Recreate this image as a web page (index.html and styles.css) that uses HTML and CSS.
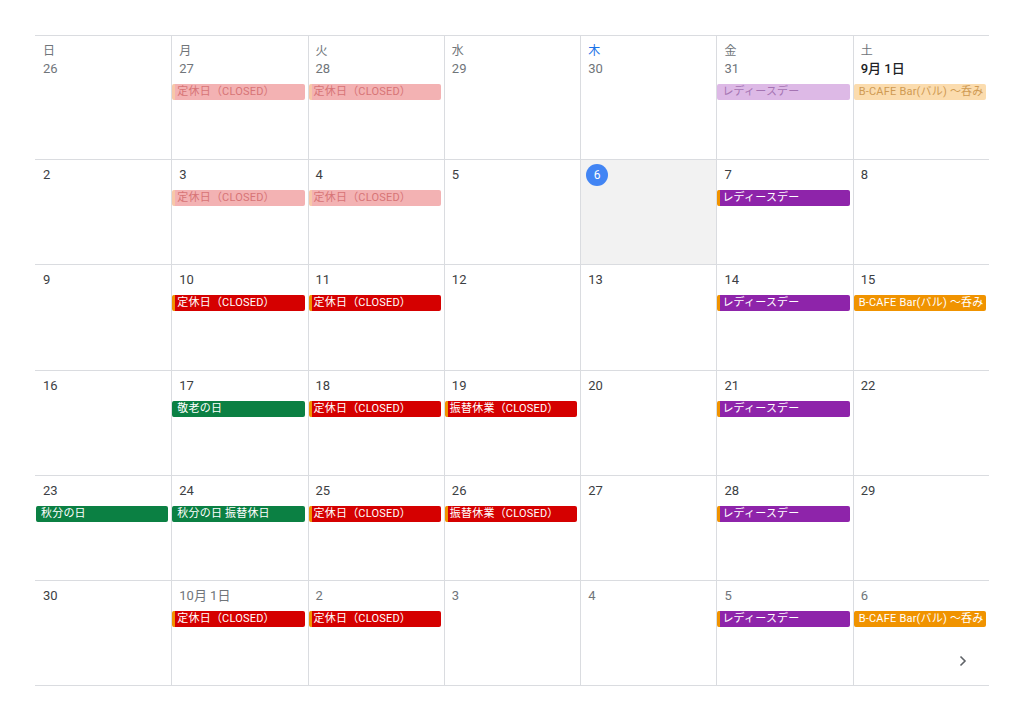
FILE: index.html
```html
<!DOCTYPE html>
<html lang="ja">
<head>
<meta charset="utf-8">
<link rel="stylesheet" href="styles.css">
</head>
<body>
<div class="cal">
  <div class="week first">
    <div class="cell"><div class="wd">日</div><div class="day dim">26</div></div>
    <div class="cell"><div class="wd">月</div><div class="day dim">27</div><div class="ev red past">定休日（CLOSED）</div></div>
    <div class="cell"><div class="wd">火</div><div class="day dim">28</div><div class="ev red past">定休日（CLOSED）</div></div>
    <div class="cell"><div class="wd">水</div><div class="day dim">29</div></div>
    <div class="cell"><div class="wd today-wd">木</div><div class="day dim">30</div></div>
    <div class="cell"><div class="wd">金</div><div class="day dim">31</div><div class="ev purple past">レディースデー</div></div>
    <div class="cell"><div class="wd">土</div><div class="day strong">9月 1日</div><div class="ev orange past">B-CAFE Bar(バル) 〜呑み</div></div>
  </div>
  <div class="week">
    <div class="cell"><div class="day">2</div></div>
    <div class="cell"><div class="day">3</div><div class="ev red past">定休日（CLOSED）</div></div>
    <div class="cell"><div class="day">4</div><div class="ev red past">定休日（CLOSED）</div></div>
    <div class="cell"><div class="day">5</div></div>
    <div class="cell today"><div class="day"><span class="dot">6</span></div></div>
    <div class="cell"><div class="day">7</div><div class="ev purple">レディースデー</div></div>
    <div class="cell"><div class="day">8</div></div>
  </div>
  <div class="week">
    <div class="cell"><div class="day">9</div></div>
    <div class="cell"><div class="day">10</div><div class="ev red">定休日（CLOSED）</div></div>
    <div class="cell"><div class="day">11</div><div class="ev red">定休日（CLOSED）</div></div>
    <div class="cell"><div class="day">12</div></div>
    <div class="cell"><div class="day">13</div></div>
    <div class="cell"><div class="day">14</div><div class="ev purple">レディースデー</div></div>
    <div class="cell"><div class="day">15</div><div class="ev orange">B-CAFE Bar(バル) 〜呑み</div></div>
  </div>
  <div class="week">
    <div class="cell"><div class="day">16</div></div>
    <div class="cell"><div class="day">17</div><div class="ev green">敬老の日</div></div>
    <div class="cell"><div class="day">18</div><div class="ev red">定休日（CLOSED）</div></div>
    <div class="cell"><div class="day">19</div><div class="ev red">振替休業（CLOSED）</div></div>
    <div class="cell"><div class="day">20</div></div>
    <div class="cell"><div class="day">21</div><div class="ev purple">レディースデー</div></div>
    <div class="cell"><div class="day">22</div></div>
  </div>
  <div class="week">
    <div class="cell"><div class="day">23</div><div class="ev green">秋分の日</div></div>
    <div class="cell"><div class="day">24</div><div class="ev green">秋分の日 振替休日</div></div>
    <div class="cell"><div class="day">25</div><div class="ev red">定休日（CLOSED）</div></div>
    <div class="cell"><div class="day">26</div><div class="ev red">振替休業（CLOSED）</div></div>
    <div class="cell"><div class="day">27</div></div>
    <div class="cell"><div class="day">28</div><div class="ev purple">レディースデー</div></div>
    <div class="cell"><div class="day">29</div></div>
  </div>
  <div class="week">
    <div class="cell"><div class="day">30</div></div>
    <div class="cell"><div class="day dim">10月 1日</div><div class="ev red">定休日（CLOSED）</div></div>
    <div class="cell"><div class="day dim">2</div><div class="ev red">定休日（CLOSED）</div></div>
    <div class="cell"><div class="day dim">3</div></div>
    <div class="cell"><div class="day dim">4</div></div>
    <div class="cell"><div class="day dim">5</div><div class="ev purple">レディースデー</div></div>
    <div class="cell"><div class="day dim">6</div><div class="ev orange">B-CAFE Bar(バル) 〜呑み</div>
      <div class="more"><svg width="8" height="12" viewBox="0 0 8 12"><path d="M1.5 1.5 L6 6 L1.5 10.5" fill="none" stroke="#5f6368" stroke-width="1.6"/></svg></div>
    </div>
  </div>
</div>
</body>
</html>
```

FILE: styles.css
```css
html, body {
  margin: 0;
  padding: 0;
  background: #fff;
}
body {
  font-family: Roboto, "Noto Sans CJK JP", sans-serif;
  color: #3c4043;
}
.cal {
  margin: 35px 0 0 35px;
  width: 954px;
  border-top: 1px solid #dadce0;
}
.week {
  display: grid;
  grid-template-columns: repeat(7, 1fr);
  height: 105.3px;
  border-bottom: 1px solid #dadce0;
  box-sizing: border-box;
}
.week.first {
  height: 124px;
}
.cell {
  border-left: 1px solid #dadce0;
  display: flex;
  flex-direction: column;
  min-width: 0;
  overflow: hidden;
}
.cell:first-child {
  border-left-color: transparent;
}
.cell.today {
  background: #f2f2f2;
}
.wd {
  font-size: 12px;
  line-height: 16px;
  color: #70757a;
  padding: 7px 0 0 7px;
  height: 18px;
}
.wd.today-wd {
  color: #1a73e8;
}
.day {
  font-size: 13px;
  line-height: 16px;
  height: 16px;
  padding: 7px 0 0 7px;
  margin-bottom: 7px;
  color: #3c4043;
}
.first .day {
  padding-top: 0;
  margin-bottom: 7px;
}
.day.dim {
  color: #70757a;
}
.day.strong {
  color: #202124;
  font-weight: 500;
}
.dot {
  display: inline-flex;
  align-items: center;
  justify-content: center;
  width: 22px;
  height: 22px;
  border-radius: 50%;
  background: #4285f4;
  color: #fff;
  font-size: 12px;
  margin: -3px 0 0 -2px;
}
.ev {
  height: 16px;
  line-height: 16px;
  font-size: 11px;
  color: #fff;
  margin-right: 3px;
  border-radius: 2px;
  padding-left: 2px;
  border-left: 3px solid;
  white-space: nowrap;
  overflow: hidden;
  letter-spacing: 0.2px;
}
.ev.red {
  background: #d50000;
  border-left-color: #f09300;
}
.ev.purple {
  background: #8e24aa;
  border-left-color: #f09300;
}
.ev.orange {
  background: #f09300;
  border-left-color: #f09300;
}
.ev.green {
  background: #0b8043;
  border-left-color: #0b8043;
}
.ev.red.past {
  background: #f3b2b3;
  border-left-color: #f7c8a8;
  color: #d77476;
}
.ev.purple.past {
  background: #ddb9e6;
  border-left-color: #ddb9e6;
  color: #a574b3;
}
.ev.orange.past {
  background: #fbdcae;
  border-left-color: #fbdcae;
  color: #cf9a52;
}
.more {
  margin-top: auto;
  align-self: flex-end;
  margin-right: 22px;
  margin-bottom: 18px;
  height: 12px;
  line-height: 0;
}
```
